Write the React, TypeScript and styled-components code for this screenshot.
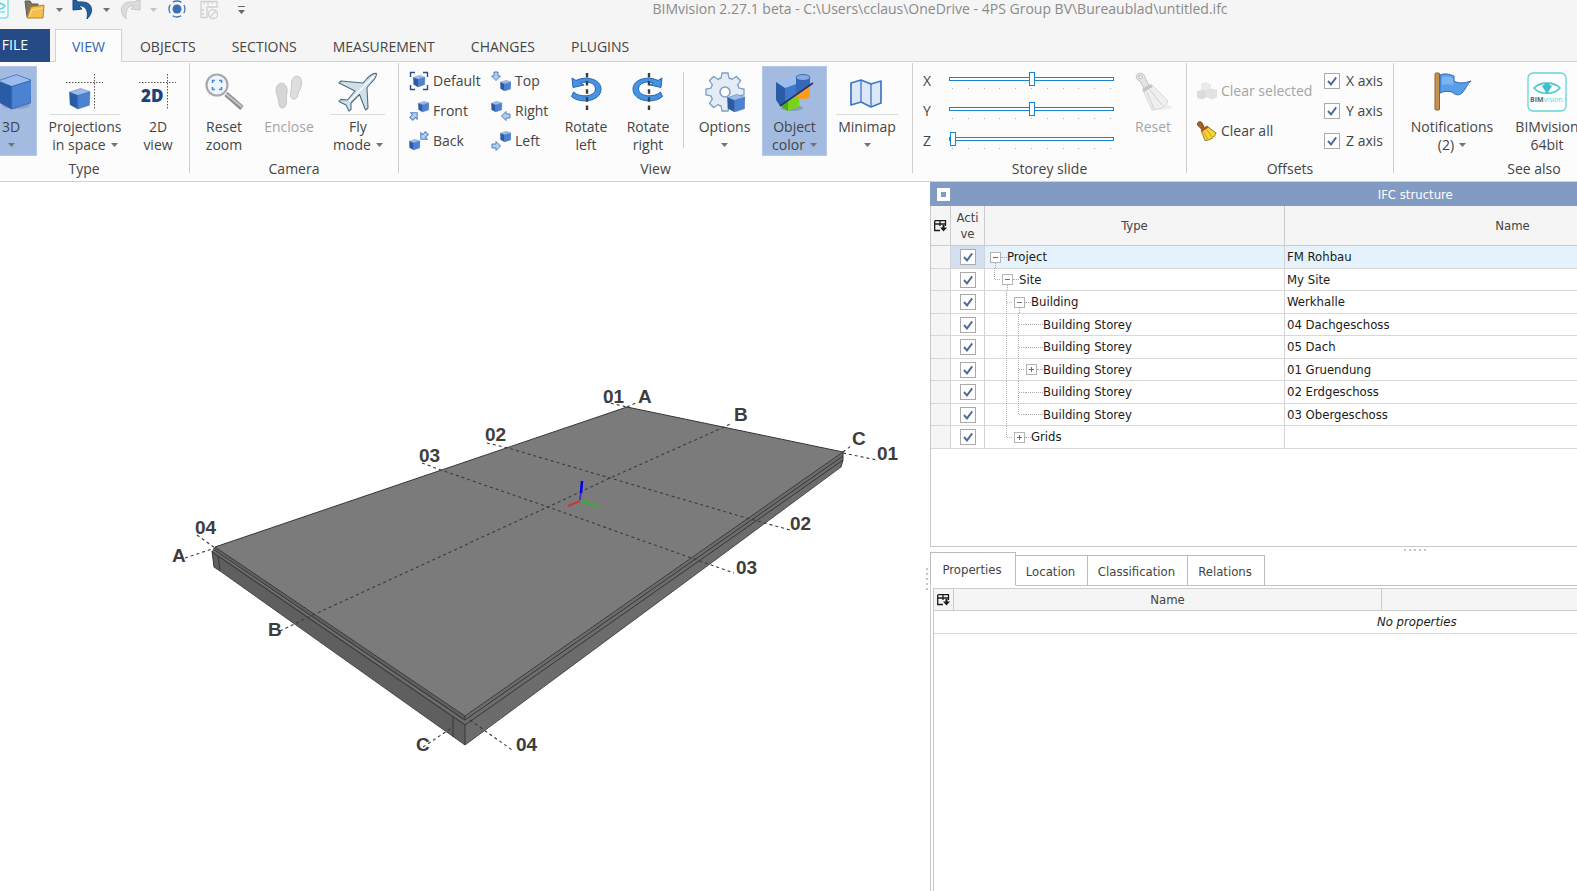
import React, { useState } from "react";
import styled, { createGlobalStyle, css } from "styled-components";

/* ---------- theme values ---------- */

const uiFont = `"Segoe UI", "Open Sans", "Noto Sans", sans-serif`;
const gridFont = `Tahoma, "DejaVu Sans Condensed", "DejaVu Sans", sans-serif`;

const check = `url("data:image/svg+xml,%3Csvg xmlns='http://www.w3.org/2000/svg' viewBox='0 0 14 14'%3E%3Cpath d='M3 7l3 3.4L11.2 3.4' fill='none' stroke='%234f6a96' stroke-width='1.9'/%3E%3C/svg%3E")`;

const GlobalStyle = createGlobalStyle`
  *, *::before, *::after { box-sizing: border-box; }
  html, body, #root { height: 100%; }
  body { margin: 0; background: #fff; overflow: hidden; }
  button, input { font: inherit; color: inherit; margin: 0; }
`;

/* ---------- shell ---------- */

const Page = styled.div`
  display: flex;
  flex-direction: column;
  height: 100vh;
  overflow: hidden;
  font: 14px/18px ${uiFont};
  color: #444;
`;

const TitleBar = styled.header`
  display: flex;
  height: 29px;
  flex: none;
  background: #f5f5f5;
`;

const QuickAccess = styled.div`
  display: flex;
  flex: none;
  width: 303px;
  height: 20px;
`;

const QuickButton = styled.button<{ $w: number }>`
  width: ${(p) => p.$w}px;
  height: 20px;
  padding: 0;
  border: 0;
  background: none;
  display: flex;
  align-items: center;
  justify-content: center;
  overflow: hidden;
`;

const WindowTitle = styled.h1`
  flex: 1;
  margin: 0;
  font-size: 14px;
  line-height: 18px;
  font-weight: 400;
  text-align: center;
  color: #8a8a8a;
  white-space: nowrap;
`;

const TabBar = styled.nav`
  display: flex;
  flex: none;
  height: 33px;
  background: #f5f5f5;
  box-shadow: inset 0 -1px #d2d2d2;
`;

const FileTab = styled.button`
  width: 50px;
  padding: 0 22px 2px 0;
  border: 0;
  background: #254b87;
  color: #fff;
  display: flex;
  align-items: center;
  justify-content: flex-end;
`;

const RibbonTab = styled.button<{ $active?: boolean }>`
  padding: 2px ${(p) => (p.$active ? 16 : 17)}px 0;
  margin-left: ${(p) => (p.$active ? 5 : 0)}px;
  border: 1px solid transparent;
  border-bottom: 0;
  background: none;
  white-space: nowrap;
  ${(p) =>
    p.$active &&
    css`
      background: #fcfcfc;
      border-color: #d2d2d2;
      color: #3465b0;
    `}
`;

/* ---------- ribbon ---------- */

const Ribbon = styled.section`
  display: flex;
  flex: none;
  height: 120px;
  background: #fcfcfc;
  border-bottom: 1px solid #d2d2d2;
  overflow: hidden;
`;

const Group = styled.div<{ $w: number; $pad?: number; $bleed?: number; $gap?: number }>`
  display: flex;
  flex: none;
  flex-direction: column;
  width: ${(p) => p.$w}px;
  margin-left: -${(p) => p.$bleed ?? 0}px;
  padding-top: 4px;
  & > div {
    display: flex;
    height: 94px;
    gap: ${(p) => p.$gap ?? 8}px;
    padding-left: ${(p) => p.$pad ?? 6}px;
  }
  & > h2 {
    margin: 0;
    font-size: 14px;
    line-height: 18px;
    font-weight: 400;
    text-align: center;
  }
`;

const GroupRule = styled.div`
  flex: none;
  width: 1px;
  height: 110px;
  margin-top: 1px;
  background: #cfcfcf;
`;

const InnerRule = styled.div`
  flex: none;
  width: 1px;
  height: 76px;
  margin: 6px 3px 0 0;
  background: #d0d0d0;
`;

const BigButton = styled.button<{ $w: number; $on?: boolean; $split?: boolean }>`
  display: flex;
  flex: none;
  flex-direction: column;
  align-items: center;
  width: ${(p) => p.$w}px;
  height: 90px;
  padding: 5px 0 0;
  border: 1px solid ${(p) => (p.$on ? "#b3c8ea" : "transparent")};
  background: ${(p) => (p.$on ? "#a3bbe1" : "none")};
  white-space: nowrap;
  &:disabled {
    color: #a5a5a5;
  }
  & > svg {
    flex: none;
    width: 40px;
    height: 40px;
  }
  & > hr {
    flex: none;
    width: calc(100% - 8px);
    height: 1px;
    margin: 2px 0 3px;
    border: 0;
    background: ${(p) => (p.$split ? "#d9d9d9" : "transparent")};
  }
`;

const Line = styled.span`
  display: flex;
  flex: none;
  align-items: center;
  height: 18px;
  gap: 5px;
`;

const SmallColumn = styled.div<{ $w: number; $split?: number }>`
  display: flex;
  flex: none;
  flex-direction: column;
  width: ${(p) => p.$w}px;
  gap: ${(p) => p.$split ?? 10}px;
  padding-top: ${(p) => (p.$split ? 15 : 5)}px;
`;

const SmallButton = styled.button`
  display: flex;
  align-items: center;
  gap: 4px;
  height: 20px;
  padding: 0;
  border: 0;
  background: none;
  white-space: nowrap;
  &:disabled {
    color: #a5a5a5;
  }
  & > svg {
    flex: none;
    width: 20px;
    height: 20px;
  }
`;

const SliderRow = styled.label`
  display: flex;
  height: 20px;
  & > span {
    width: 26px;
    line-height: 20px;
  }
`;

const SliderBody = styled.div`
  width: 165px;
  padding-top: 1px;
`;

const Range = styled.input.attrs({ type: "range" })`
  appearance: none;
  display: block;
  width: 100%;
  height: 14px;
  background: none;
  &::-webkit-slider-runnable-track {
    height: 4px;
    border: 1px solid #1883d0;
    background: #fff;
  }
  &::-webkit-slider-thumb {
    appearance: none;
    width: 6px;
    height: 14px;
    margin-top: -6px;
    border: 1px solid #1883d0;
    background: #fff;
  }
`;

const Ticks = styled.div`
  display: flex;
  justify-content: space-between;
  padding: 2px 3px 0;
  & > i {
    width: 1px;
    height: 1px;
    background: #b5b5b5;
  }
`;

const CheckBox = styled.input.attrs({ type: "checkbox" })`
  appearance: none;
  flex: none;
  display: block;
  width: 16px;
  height: 16px;
  border: 1px solid #a9a9a9;
  background: #fff;
  &:checked {
    background: #fff ${check} center / 14px 14px no-repeat;
  }
`;

const CheckRow = styled.label`
  display: flex;
  align-items: center;
  gap: 6px;
  height: 20px;
`;

/* ---------- workspace ---------- */

const Workspace = styled.main`
  display: grid;
  grid-template-columns: 923fr 7px 647fr;
  flex: 1;
  min-height: 0;
`;

const Viewport = styled.div`
  min-width: 0;
  min-height: 0;
  overflow: hidden;
  & > svg {
    display: block;
    width: 100%;
    height: 100%;
    overflow: visible;
  }
`;

const Splitter = styled.div<{ $horizontal?: boolean }>`
  display: flex;
  flex: none;
  flex-direction: ${(p) => (p.$horizontal ? "row" : "column")};
  align-items: center;
  justify-content: center;
  gap: 3px;
  padding-top: ${(p) => (p.$horizontal ? 0 : 84)}px;
  width: ${(p) => (p.$horizontal ? "150%" : "auto")};
  height: ${(p) => (p.$horizontal ? "5px" : "auto")};
  & > i {
    width: 2px;
    height: 2px;
    background: #c4c4c4;
  }
`;

const Side = styled.aside`
  display: flex;
  flex-direction: column;
  min-width: 0;
  min-height: 0;
  overflow: hidden;
  font: 13px/16px ${gridFont};
`;

/* The docked panels are wider than the visible part of the window. */
const Wide = styled.div<{ $grow: number }>`
  display: flex;
  flex-direction: column;
  flex: ${(p) => p.$grow} 1 0;
  min-height: 0;
  width: 150%;
  border-left: 1px solid #c8c8c8;
`;

const StructurePane = styled(Wide)`
  border-bottom: 1px solid #c8c8c8;
`;

const PaneTitle = styled.div`
  display: flex;
  align-items: center;
  height: 24px;
  padding: 1px 0 0 7px;
  margin-left: -1px;
  background: #829bc2;
  color: #fff;
  & > h2 {
    flex: 1;
    margin: 0 20px 0 0;
    font-size: 13px;
    font-weight: 400;
    text-align: center;
  }
`;

const PinButton = styled.button`
  width: 13px;
  height: 13px;
  padding: 0;
  border: 4px solid #fff;
  background: #829bc2;
`;

const DataTable = styled.table`
  width: 100%;
  table-layout: fixed;
  border-collapse: separate;
  border-spacing: 0;
  & th,
  & td {
    padding: 0;
    border-right: 1px solid #d4d4d4;
    border-bottom: 1px solid #d8d8d8;
    white-space: nowrap;
  }
  & th {
    background: #f5f5f5;
    font-weight: 400;
    border-color: #cccccc;
  }
  & th > svg {
    display: block;
    margin: 0 auto;
  }
`;

const StructureTable = styled(DataTable)`
  & thead th {
    height: 40px;
  }
  & tbody tr {
    height: 22px;
    color: #1a1a1a;
  }
  & tbody tr:nth-child(odd) {
    height: 23px;
  }
  & tbody td:nth-child(4) {
    padding-left: 2px;
  }
`;

const Col = styled.col<{ $w?: number }>`
  width: ${(p) => (p.$w ? `${p.$w}px` : "auto")};
`;

const TreeRow = styled.tr<{ $selected?: boolean }>`
  & > td {
    background: ${(p) => (p.$selected ? "#e6f3fd" : "#fff")};
  }
  & > td:nth-child(1) {
    background: #f5f5f5;
  }
  & > td:nth-child(2) {
    background: ${(p) => (p.$selected ? "#d3def1" : "#fff")};
    padding-left: 9px;
  }
`;

const TreeCell = styled.div`
  display: flex;
  align-items: center;
  height: 21px;
  padding-left: 4px;
  & > svg {
    flex: none;
  }
`;

const ExpandSlot = styled.span<{ $open?: boolean }>`
  display: flex;
  flex-direction: column;
  align-items: center;
  width: 12px;
  height: 21px;
  padding-top: 5px;
  & > i {
    flex: 1;
    border-left: 1px dotted ${(p) => (p.$open ? "#aaa" : "transparent")};
  }
`;

const ExpandButton = styled.button`
  display: flex;
  width: 11px;
  height: 11px;
  padding: 0;
  border: 1px solid #b4b4b4;
  background: #fff;
`;

const Dash = styled.span<{ $w: number }>`
  width: ${(p) => p.$w}px;
  border-top: 1px dotted #aaa;
`;

const PropTabs = styled.div`
  display: flex;
  align-items: flex-end;
  height: 34px;
  border-bottom: 1px solid #c4c4c4;
  margin-left: -1px;
`;

const PropTab = styled.button<{ $w: number; $active?: boolean }>`
  width: ${(p) => p.$w}px;
  height: ${(p) => (p.$active ? 34 : 31)}px;
  padding: 2px 2px 0 0;
  margin: 0 0 -1px;
  border: 1px solid #bcbcbc;
  border-left-width: ${(p) => (p.$active ? 1 : 0)}px;
  border-bottom-color: ${(p) => (p.$active ? "#fff" : "#c4c4c4")};
  background: #fff;
`;

const PropTable = styled(DataTable)`
  margin: 2px 0 0 2px;
  width: calc(100% - 2px);
  border-left: 1px solid #c8c8c8;
  border-top: 1px solid #cccccc;
  & th {
    height: 22px;
  }
  & td {
    height: 23px;
    text-align: center;
    font-style: italic;
    color: #1a1a1a;
  }
`;

const PropFrame = styled.div`
  flex: 1;
  display: flex;
  flex-direction: column;
`;

const PropFill = styled.div`
  flex: 1;
  margin-left: 2px;
  border-left: 1px solid #c8c8c8;
`;

/* ---------- icons ---------- */

const Caret = () => (
  <svg width="7" height="4" viewBox="0 0 7 4" aria-hidden="true">
    <path d="M0 0h7L3.5 4z" fill="#737373" />
  </svg>
);

type CubeProps = { x: number; y: number; s: number; tone?: [string, string, string] };
const Cube = ({ x, y, s, tone = ["#9bbcec", "#2a5ca6", "#4c82d2"] }: CubeProps) => (
  <g transform={`translate(${x} ${y}) scale(${s})`} stroke="#2f5fa8" strokeWidth=".02" strokeLinejoin="round">
    <path d="M.02 .2L.55 .02 1 .18 .42 .36z" fill={tone[0]} />
    <path d="M.02 .2L.42 .36 .42 1 .05 .8z" fill={tone[1]} />
    <path d="M.42 .36L1 .18 .97 .82 .42 1z" fill={tone[2]} />
  </g>
);

const CrossGuides = () => (
  <path d="M1 10.500H38M29.500 2V37" fill="none" stroke="#555" strokeDasharray="1.500 1.500" />
);

const Icon3D = () => (
  <svg viewBox="0 0 40 40">
    <ellipse cx="25" cy="33" rx="14" ry="4" fill="#6f86ad" opacity=".5" />
    <Cube x={6} y={2} s={35} />
  </svg>
);

const IconProjections = () => (
  <svg viewBox="0 0 40 40">
    <CrossGuides />
    <Cube x={4} y={16} s={21} />
  </svg>
);

const Icon2D = () => (
  <svg viewBox="0 0 40 40">
    <CrossGuides />
    <text x="3" y="30" fontFamily="Open Sans, sans-serif" fontWeight="800" fontSize="17" fill="#1d4279">
      2D
    </text>
  </svg>
);

const IconZoom = () => (
  <svg viewBox="0 0 40 40">
    <path d="M22 22L38 36" stroke="#8d8d8d" strokeWidth="5" />
    <path d="M22 22L38 35" stroke="#c5c5c5" strokeWidth="2" />
    <circle cx="13" cy="13" r="10.500" fill="#eef6ff" stroke="#a9a9a9" strokeWidth="2.200" />
    <path d="M8.500 11V8.500h2.500M15 8.500h2.500v2.500M17.500 15v2.500h-2.500M11 17.500H8.500v-2.500" fill="none" stroke="#4a8be0" strokeWidth="1.600" />
  </svg>
);

const IconFeet = () => (
  <svg viewBox="0 0 40 40" fill="#d6d6d6" stroke="#c6c6c6">
    <path d="M8 14c3-5 9-3 10 3 .6 4-1 6-.5 10 .5 3-.5 9-4 9s-3.500-4-4-8c-.7-4-4-9-1.500-14z" />
    <path d="M23 8c3-6 9-5 9.500 2 .3 6-3 9-3.500 12-.6 3-2 6-5 5s-3-5-2-8 0-7 1-11z" fill="#dedede" />
  </svg>
);

const IconPlane = () => (
  <svg viewBox="0 0 40 40" fill="#cfe0e8" stroke="#4d6f80" strokeWidth="1.100" strokeLinejoin="round">
    <path d="M38.500 1.500c-3-.6-6 1.500-9.500 5l-4 4.500L3 9l-2 2 16 8-7.500 9-6.500-.6-2 2 7 3.600 3 6 2-1.500v-6.500l8.500-8.500 6 15.500 2.500-2-1-20.500 4.500-5c3.500-3.500 5-6.500 5-9z" />
    <path d="M37 3L11 29.500" stroke="#fff" strokeWidth="1.500" />
  </svg>
);

const Rotate = ({ right }: { right?: boolean }) => (
  <svg viewBox="0 0 40 40">
    <g transform={right ? "matrix(-1 0 0 1 40 0)" : undefined}>
      <path
        d="M6 6l1 9.500L18 13l-3.500-2c7-2.500 15 0 15 6 0 8-16 9-22 3l-2 4.500c8 7.500 29.500 5.500 29.500-7.500 0-10-15-13.500-25-8.500z"
        fill="#4793e2"
        stroke="#2068b6"
        strokeLinejoin="round"
      />
    </g>
    <path d="M21 1V38" stroke="#3d3d3d" strokeWidth="2.400" strokeDasharray="4.500 3.600" />
  </svg>
);

const teeth = Array.from({ length: 8 }, (_, i) => i * 45);
const IconOptions = () => (
  <svg viewBox="0 0 40 40">
    <g fill="#e3ecf4" stroke="#7da0c2" strokeWidth="1.300">
      {teeth.map((a) => (
        <path key={a} transform={`rotate(${a} 20 20)`} d="M16 7l1-6h6l1 6z" />
      ))}
      <circle cx="20" cy="20" r="14.500" />
    </g>
    {teeth.map((a) => (
      <path key={a} transform={`rotate(${a} 20 20)`} d="M17 4l-.6 4h7.200L23 4z" fill="#e3ecf4" />
    ))}
    <circle cx="20" cy="20" r="5" fill="#fff" stroke="#7da0c2" strokeWidth="1.500" />
    <Cube x={22} y={22} s={18} />
  </svg>
);

const IconObjectColor = () => (
  <svg viewBox="0 0 40 40">
    <ellipse cx="17" cy="36" rx="11" ry="3" fill="#6f86ad" opacity=".6" />
    <path d="M1 10L14 6 24 11 10 16z" fill="#9bbcec" />
    <path d="M1 10L10 16V31L5 34 1 28z" fill="#2a5ca6" />
    <path d="M10 16L24 11V21L10 31z" fill="#4278cb" />
    <path d="M7 33l6-4v10l-6-4z" fill="#4fae11" />
    <path d="M13 29L24 21V35L13 39z" fill="#77d31c" />
    <path d="M21 5v17a7 3 0 0 0 14 0V5z" fill="#3568b6" />
    <path d="M21 23L35 13V24a7 3 0 0 1-14 0z" fill="#ff9a1d" />
    <ellipse cx="28" cy="5.500" rx="7" ry="3" fill="#86abe4" stroke="#2a5ca6" strokeWidth=".8" />
    <path d="M5 34L38 11" stroke="#1d3768" strokeWidth="1.600" />
  </svg>
);

const IconMinimap = () => (
  <svg viewBox="0 0 40 40" fill="#dce8f8" stroke="#3d78c2" strokeWidth="1.700" strokeLinejoin="round">
    <path d="M4 11l10-3 10 4 10-3v22l-10 4-10-5-10 3z" />
    <path d="M14 8v22M24 12v23" fill="none" strokeWidth="1.300" />
  </svg>
);

const IconBroom = () => (
  <svg viewBox="0 0 40 40">
    <ellipse cx="28" cy="35" rx="11" ry="3" fill="#eee" />
    <path d="M5 2c3-2 7 0 7 4l5 9-5 3-5-9c-4-1-5-5-2-7z" fill="#e4e4e4" stroke="#c2c2c2" />
    <circle cx="7.500" cy="5" r="1.600" fill="#fcfcfc" stroke="#bbb" />
    <path d="M10 18l9-5 16 16c-2 6-8 8-16 9z" fill="#efefef" stroke="#d8d8d8" />
    <path d="M14 20l7 17M17 18l12 15M10 18l9-5" stroke="#d4d4d4" strokeWidth="1.100" />
    <path d="M9 17l9-5 1.500 3L11 20z" fill="#c4c4c4" />
  </svg>
);

const IconFlag = () => (
  <svg viewBox="0 0 40 40">
    <rect x="3" y="1" width="4.500" height="37" rx="1" fill="#c4924f" stroke="#8a622e" />
    <path
      d="M8 3c5-2 9-1 14 1v5c5 3 11 2 17 0-4 3-5 8-9 12-3 3-7 2-10-1-4-1-8-1-12 1z"
      fill="#5a9de8"
      stroke="#2e6db8"
      strokeLinejoin="round"
    />
    <path d="M10 5c4-1 7-1 11 1v7c-4-1-8-1-11 0z" fill="#8abdf4" opacity=".7" />
  </svg>
);

const IconBim = () => (
  <svg viewBox="0 0 40 40">
    <rect x="1" y="1" width="38" height="38" rx="5" fill="#fdfefe" stroke="#63d3dc" strokeWidth="1.300" />
    <path d="M7 16c6-6.500 20-6.500 26 0-6 7-20 7-26 0z" fill="none" stroke="#45c6d0" strokeWidth="1.600" />
    <path d="M15 14l5-3 5 3-5 8z" fill="#3cc0cb" />
    <text x="3" y="30" fontFamily="Open Sans, sans-serif" fontSize="7" fontWeight="700" fill="#666">
      BIM<tspan fill="#63d3dc" fontWeight="400">vision</tspan>
    </text>
  </svg>
);

const arrowPath = "M-2 -4H2V0H4.500L0 4.500 -4.500 0H-2z";
const MiniArrow = ({ x, y, r }: { x: number; y: number; r: number }) => (
  <path transform={`translate(${x} ${y}) rotate(${r})`} d={arrowPath} fill="#b3cdf2" stroke="#5580bd" />
);

const views: Record<string, React.ReactNode> = {
  Default: (
    <>
      <path d="M1.500 6V1.500H6M14 1.500h4.500V6M18.500 14v4.500H14M6 18.500H1.500V14" fill="none" stroke="#24508f" strokeWidth="1.400" />
      <Cube x={4} y={4} s={12} />
    </>
  ),
  Front: (
    <>
      <Cube x={9} y={0} s={11} />
      <MiniArrow x={5} y={15} r={225} />
    </>
  ),
  Back: (
    <>
      <Cube x={0} y={8} s={11} />
      <MiniArrow x={15} y={5} r={45} />
    </>
  ),
  Top: (
    <>
      <MiniArrow x={5} y={5} r={0} />
      <Cube x={9} y={9} s={11} />
    </>
  ),
  Right: (
    <>
      <Cube x={0} y={0} s={11} />
      <MiniArrow x={15} y={15} r={90} />
    </>
  ),
  Left: (
    <>
      <Cube x={9} y={0} s={11} />
      <MiniArrow x={5} y={15} r={270} />
    </>
  ),
};

const IconCubes = () => (
  <svg viewBox="0 0 20 20" stroke="#dadada" strokeWidth=".7" strokeLinejoin="round">
    <path d="M5 3l4-1 4 1.500v5L8 10 5 8z" fill="#ececec" />
    <path d="M0 11l4-2 5 1v6l-4 2-5-1.500z" fill="#dcdcdc" />
    <path d="M10 10l5-2 5 1.500v6L15 18l-5-2z" fill="#e3e3e3" />
    <path d="M0 11l5 1.500v5.500M5 12.500l4-2M10 10l5 1.500v6M15 11.500l5-2" fill="none" />
  </svg>
);

const IconGoldBroom = () => (
  <svg viewBox="0 0 20 20" strokeLinejoin="round">
    <path d="M1 1.500c2-1.500 4-.5 4.500 1.500L7 6.500 4.500 8 1.500 5C.2 4 0 2.500 1 1.500z" fill="#a8651a" stroke="#6b3e0c" />
    <path d="M4 9l6-4 9 7c-1 4-5 7-11 7.500z" fill="#f3d43a" stroke="#9c7b12" />
    <path d="M4 9l6-4 1.500 1.500L5 11z" fill="#c6452a" />
    <path d="M7 11l3.500 7M10 9l5 7" stroke="#c9a51d" />
  </svg>
);

const IconChooser = () => (
  <svg width="13" height="12" viewBox="0 0 13 12" aria-hidden="true">
    <path d="M.7 .7H11.500V6M.7 .7V10.500H6M.7 4H11.500M6 .7V6" fill="none" stroke="#1b1b1b" strokeWidth="1.300" />
    <path d="M6 7.500h7L9.500 11.500zM8.500 5h2v3h-2z" fill="#1b1b1b" />
  </svg>
);

/* ---------- tree guides ---------- */

type Slot = "blank" | "line" | "tee" | "corner";
const guidePath: Record<Slot, string> = {
  blank: "",
  line: "M5.500 0V23",
  tee: "M5.500 0V23M6 11.500H12",
  corner: "M5.500 0V11.500H12",
};
const Guide = ({ kind }: { kind: Slot }) => (
  <svg width="12" height="23" viewBox="0 0 12 23" aria-hidden="true">
    <path d={guidePath[kind]} fill="none" stroke="#b0b0b0" strokeDasharray="1 1" />
  </svg>
);

type Node = { type: string; name: string; slots: Slot[]; state: "open" | "closed" | "leaf" };
const nodes: Node[] = [
  { type: "Project", name: "FM Rohbau", slots: [], state: "open" },
  { type: "Site", name: "My Site", slots: ["corner"], state: "open" },
  { type: "Building", name: "Werkhalle", slots: ["blank", "tee"], state: "open" },
  { type: "Building Storey", name: "04 Dachgeschoss", slots: ["blank", "line", "tee"], state: "leaf" },
  { type: "Building Storey", name: "05 Dach", slots: ["blank", "line", "tee"], state: "leaf" },
  { type: "Building Storey", name: "01 Gruendung", slots: ["blank", "line", "tee"], state: "closed" },
  { type: "Building Storey", name: "02 Erdgeschoss", slots: ["blank", "line", "tee"], state: "leaf" },
  { type: "Building Storey", name: "03 Obergeschoss", slots: ["blank", "line", "corner"], state: "leaf" },
  { type: "Grids", name: "", slots: ["blank", "corner"], state: "closed" },
];

/* ---------- model scene ---------- */

const gridLabels: [string, number, number][] = [
  ["01", 603, 403],
  ["A", 638, 403],
  ["B", 734, 421],
  ["C", 852, 445],
  ["01", 877, 460],
  ["02", 485, 441],
  ["03", 419, 462],
  ["04", 195, 534],
  ["A", 172, 562],
  ["B", 268, 636],
  ["C", 416, 751],
  ["04", 516, 751],
  ["03", 736, 574],
  ["02", 790, 530],
];

const Scene = () => (
  <svg viewBox="0 182 923 709" preserveAspectRatio="xMidYMid meet" role="img" aria-label="Building model">
    <path d="M215 547L465 716V745L220 571 214 567 212 551z" fill="#5f5f5f" />
    <path d="M465 716L843 452V460L841 467 465 745z" fill="#6c6c6c" />
    <path d="M215 547L627 407 843 452 465 716z" fill="#7b7b7b" />
    <g fill="none" stroke="#363636" strokeWidth="1">
      <path d="M215 547L627 407 843 452 465 716z" />
      <path d="M214 550L465 720 843 456M212 552L465 725 843 460M212 551l2 16 6 4M843 452v8l-2 7" />
      <path d="M220 571L465 745 841 467" stroke="#4a4a4a" />
      <path d="M465 716v4M465 725v20M453 717v20M218 556l2 14" />
    </g>
    <path d="M214 551L465 722.500" stroke="#7b7b7b" fill="none" />
    <g fill="none" stroke="#3a3a3a" strokeWidth="1.100" strokeDasharray="3 3">
      <path d="M280 631L313 615 548 507 610 478 722 428 732 423" />
      <path d="M487 443L508 448 610 478 750 519 790 530" />
      <path d="M422 463L441 470 548 507 697 560 734 573" />
      <path d="M197 535L215 548M470 720L512 750M185 558L215 548M627 407L638 402" />
      <path d="M423 747L453 727M843 452L851 446M605 402L627 407M843 453L877 460" />
    </g>
    <g fill="none" strokeWidth="2">
      <path d="M580 500L581 491" stroke="#3838c0" />
      <path d="M581 493L582 481" stroke="#0000f0" strokeWidth="2.500" />
      <path d="M580 501L568 506" stroke="#c03a3a" />
      <path d="M581 501L598 506" stroke="#35b035" />
    </g>
    <g fontFamily="Liberation Sans, Arial, sans-serif" fontWeight="700" fontSize="19" fill="#3d3d3d">
      {gridLabels.map(([t, x, y]) => (
        <text key={`${t}-${x}`} x={x} y={y}>
          {t}
        </text>
      ))}
    </g>
  </svg>
);

/* ---------- page ---------- */

const ribbonTabs = ["OBJECTS", "SECTIONS", "MEASUREMENT", "CHANGES", "PLUGINS"];

const ViewButton = ({ name }: { name: string }) => (
  <SmallButton>
    <svg viewBox="0 0 20 20" aria-hidden="true">
      {views[name]}
    </svg>
    {name}
  </SmallButton>
);

const Slider = ({ axis, start }: { axis: string; start: number }) => {
  const [value, setValue] = useState(start);
  return (
    <SliderRow>
      <span>{axis}</span>
      <SliderBody>
        <Range min={0} max={10} value={value} onChange={(e) => setValue(Number(e.target.value))} />
        <Ticks>
          {Array.from({ length: 11 }, (_, i) => (
            <i key={i} />
          ))}
        </Ticks>
      </SliderBody>
    </SliderRow>
  );
};

export default function App() {
  return (
    <Page>
      <GlobalStyle />
      <TitleBar>
        <QuickAccess>
          <QuickButton $w={18} aria-label="Application">
            <svg width="18" height="20" viewBox="0 0 18 20">
              <rect x="-10" y="-3" width="18" height="21" rx="3" fill="#f1fcfc" stroke="#8adfe4" strokeWidth="1.500" />
              <path d="M-6 6c4-4 8-3 11 0-3 4-7 4-11 0" fill="none" stroke="#6bd0d8" strokeWidth="1.500" />
              <path d="M-6 12h11" stroke="#a6e6ea" strokeWidth="2" />
            </svg>
          </QuickButton>
          <QuickButton $w={34} aria-label="Open">
            <svg width="22" height="20" viewBox="0 0 22 20">
              <path d="M1 1h5l2 3h6v13H3z" fill="#7b7468" stroke="#5d574d" />
              <path d="M3 18L7 7l13-2-1 13z" fill="#f4bf4d" stroke="#b98522" />
              <path d="M5 17l3-7 11-2" fill="none" stroke="#fbdc8d" />
            </svg>
          </QuickButton>
          <QuickButton $w={15} aria-label="Recent files">
            <Caret />
          </QuickButton>
          <QuickButton $w={32} aria-label="Undo">
            <svg width="22" height="20" viewBox="0 0 22 20">
              <path d="M1 0v10l9-1-3-3c5-1 10 3 8 13 8-8 5-17-5-17H6L4 0z" fill="#24609f" stroke="#17487e" />
            </svg>
          </QuickButton>
          <QuickButton $w={15} aria-label="Undo list">
            <Caret />
          </QuickButton>
          <QuickButton $w={32} aria-label="Redo" disabled>
            <svg width="22" height="20" viewBox="0 0 22 20">
              <path d="M21 0v10l-9-1 3-3c-5-1-9 3-8 13-8-8-5-17 5-17h4l2-2z" fill="#dcdcdc" stroke="#c8c8c8" />
            </svg>
          </QuickButton>
          <QuickButton $w={15} aria-label="Redo list" disabled>
            <svg width="7" height="4" viewBox="0 0 7 4">
              <path d="M0 0h7L3.500 4z" fill="#c4c4c4" />
            </svg>
          </QuickButton>
          <QuickButton $w={32} aria-label="Focus">
            <svg width="18" height="20" viewBox="0 0 18 20">
              <circle cx="9" cy="9" r="4.500" fill="#3b6fb5" />
              <circle cx="9" cy="9" r="8" fill="none" stroke="#3f77b5" strokeWidth="1.300" strokeDasharray="9 3.560" strokeDashoffset="4.500" />
            </svg>
          </QuickButton>
          <QuickButton $w={32} aria-label="Hide measurements" disabled>
            <svg width="18" height="20" viewBox="0 0 18 20" fill="none" stroke="#d0d0d0" strokeWidth="1.300">
              <path d="M7 17.500H1V1.500H17V7H7zM4 1v3M8 1v4M12 1v3M1 10h3M1 14h3" />
              <circle cx="13" cy="14" r="4.500" />
              <path d="M10 17l6-6" />
            </svg>
          </QuickButton>
          <QuickButton $w={32} aria-label="Customize toolbar">
            <svg width="7" height="8" viewBox="0 0 7 8">
              <path d="M0 .5h7" stroke="#666" />
              <path d="M0 4h7L3.500 8z" fill="#666" />
            </svg>
          </QuickButton>
        </QuickAccess>
        <WindowTitle>BIMvision 2.27.1 beta - C:\Users\cclaus\OneDrive - 4PS Group BV\Bureaublad\untitled.ifc</WindowTitle>
      </TitleBar>

      <TabBar>
        <FileTab>FILE</FileTab>
        <RibbonTab $active>VIEW</RibbonTab>
        {ribbonTabs.map((t) => (
          <RibbonTab key={t}>{t}</RibbonTab>
        ))}
      </TabBar>

      <Ribbon>
        <Group $w={210} $bleed={21}>
          <div>
            <BigButton $w={52} $on>
              <Icon3D />
              <hr />
              <Line>3D</Line>
              <Line>
                <Caret />
              </Line>
            </BigButton>
            <BigButton $w={80} $split>
              <IconProjections />
              <hr />
              <Line>Projections</Line>
              <Line>
                in space <Caret />
              </Line>
            </BigButton>
            <BigButton $w={50}>
              <Icon2D />
              <hr />
              <Line>2D</Line>
              <Line>view</Line>
            </BigButton>
          </div>
          <h2>Type</h2>
        </Group>
        <GroupRule />

        <Group $w={208}>
          <div>
            <BigButton $w={56}>
              <IconZoom />
              <hr />
              <Line>Reset</Line>
              <Line>zoom</Line>
            </BigButton>
            <BigButton $w={58} disabled>
              <IconFeet />
              <hr />
              <Line>Enclose</Line>
            </BigButton>
            <BigButton $w={64} $split>
              <IconPlane />
              <hr />
              <Line>Fly</Line>
              <Line>
                mode <Caret />
              </Line>
            </BigButton>
          </div>
          <h2>Camera</h2>
        </Group>
        <GroupRule />

        <Group $w={513} $pad={10} $gap={4}>
          <div>
            <SmallColumn $w={78}>
              <ViewButton name="Default" />
              <ViewButton name="Front" />
              <ViewButton name="Back" />
            </SmallColumn>
            <SmallColumn $w={64}>
              <ViewButton name="Top" />
              <ViewButton name="Right" />
              <ViewButton name="Left" />
            </SmallColumn>
            <BigButton $w={54}>
              <Rotate />
              <hr />
              <Line>Rotate</Line>
              <Line>left</Line>
            </BigButton>
            <BigButton $w={62}>
              <Rotate right />
              <hr />
              <Line>Rotate</Line>
              <Line>right</Line>
            </BigButton>
            <InnerRule />
            <BigButton $w={67}>
              <IconOptions />
              <hr />
              <Line>Options</Line>
              <Line>
                <Caret />
              </Line>
            </BigButton>
            <BigButton $w={65} $on>
              <IconObjectColor />
              <hr />
              <Line>Object</Line>
              <Line>
                color <Caret />
              </Line>
            </BigButton>
            <BigButton $w={72} $split>
              <IconMinimap />
              <hr />
              <Line>Minimap</Line>
              <Line>
                <Caret />
              </Line>
            </BigButton>
          </div>
          <h2>View</h2>
        </Group>
        <GroupRule />

        <Group $w={273} $pad={10} $gap={10}>
          <div>
            <SmallColumn $w={191}>
              <Slider axis="X" start={5} />
              <Slider axis="Y" start={5} />
              <Slider axis="Z" start={0} />
            </SmallColumn>
            <BigButton $w={58} disabled>
              <IconBroom />
              <hr />
              <Line>Reset</Line>
            </BigButton>
          </div>
          <h2>Storey slide</h2>
        </Group>
        <GroupRule />

        <Group $w={206} $pad={10}>
          <div>
            <SmallColumn $w={119} $split={20}>
              <SmallButton disabled>
                <IconCubes />
                Clear selected
              </SmallButton>
              <SmallButton>
                <IconGoldBroom />
                Clear all
              </SmallButton>
            </SmallColumn>
            <SmallColumn $w={64}>
              {["X", "Y", "Z"].map((a) => (
                <CheckRow key={a}>
                  <CheckBox defaultChecked />
                  {a} axis
                </CheckRow>
              ))}
            </SmallColumn>
          </div>
          <h2>Offsets</h2>
        </Group>
        <GroupRule />

        <Group $w={280} $pad={10}>
          <div>
            <BigButton $w={96}>
              <IconFlag />
              <hr />
              <Line>Notifications</Line>
              <Line>
                (2) <Caret />
              </Line>
            </BigButton>
            <BigButton $w={78}>
              <IconBim />
              <hr />
              <Line>BIMvision</Line>
              <Line>64bit</Line>
            </BigButton>
          </div>
          <h2>See also</h2>
        </Group>
      </Ribbon>

      <Workspace>
        <Viewport>
          <Scene />
        </Viewport>
        <Splitter>
          {[0, 1, 2, 3, 4].map((i) => (
            <i key={i} />
          ))}
        </Splitter>
        <Side>
          <StructurePane $grow={365}>
            <PaneTitle>
              <PinButton aria-label="Dock panel" />
              <h2>IFC structure</h2>
            </PaneTitle>
            <StructureTable>
              <colgroup>
                <Col $w={20} />
                <Col $w={34} />
                <Col $w={300} />
                <Col $w={456} />
                <Col />
              </colgroup>
              <thead>
                <tr>
                  <th>
                    <IconChooser />
                  </th>
                  <th>
                    Acti
                    <br />
                    ve
                  </th>
                  <th>Type</th>
                  <th>Name</th>
                  <th />
                </tr>
              </thead>
              <tbody>
                {nodes.map((n, i) => (
                  <TreeRow key={i} $selected={i === 0}>
                    <td />
                    <td>
                      <CheckBox defaultChecked aria-label={`${n.type} ${n.name} active`} />
                    </td>
                    <td>
                      <TreeCell>
                        {n.slots.map((s, k) => (
                          <Guide key={k} kind={s} />
                        ))}
                        {n.state === "leaf" ? (
                          <Dash $w={18} />
                        ) : (
                          <>
                            <ExpandSlot $open={n.state === "open"}>
                              <ExpandButton aria-label={n.state === "open" ? "Collapse" : "Expand"}>
                                <svg width="9" height="9" viewBox="0 0 9 9">
                                  <path
                                    d={n.state === "open" ? "M2 4.500H7" : "M2 4.500H7M4.500 2V7"}
                                    stroke="#6e6e6e"
                                  />
                                </svg>
                              </ExpandButton>
                              <i />
                            </ExpandSlot>
                            <Dash $w={6} />
                          </>
                        )}
                        {n.type}
                      </TreeCell>
                    </td>
                    <td>{n.name}</td>
                    <td />
                  </TreeRow>
                ))}
              </tbody>
            </StructureTable>
          </StructurePane>

          <Splitter $horizontal>
            {[0, 1, 2, 3, 4].map((i) => (
              <i key={i} />
            ))}
          </Splitter>

          <Wide $grow={339}>
            <PropTabs>
              <PropTab $w={86} $active>
                Properties
              </PropTab>
              <PropTab $w={72}>Location</PropTab>
              <PropTab $w={100}>Classification</PropTab>
              <PropTab $w={77}>Relations</PropTab>
            </PropTabs>
            <PropFrame>
              <PropTable>
                <colgroup>
                  <Col $w={20} />
                  <Col $w={428} />
                  <Col />
                </colgroup>
                <thead>
                  <tr>
                    <th>
                      <IconChooser />
                    </th>
                    <th>Name</th>
                    <th />
                  </tr>
                </thead>
                <tbody>
                  <tr>
                    <td colSpan={3}>No properties</td>
                  </tr>
                </tbody>
              </PropTable>
              <PropFill />
            </PropFrame>
          </Wide>
        </Side>
      </Workspace>
    </Page>
  );
}
